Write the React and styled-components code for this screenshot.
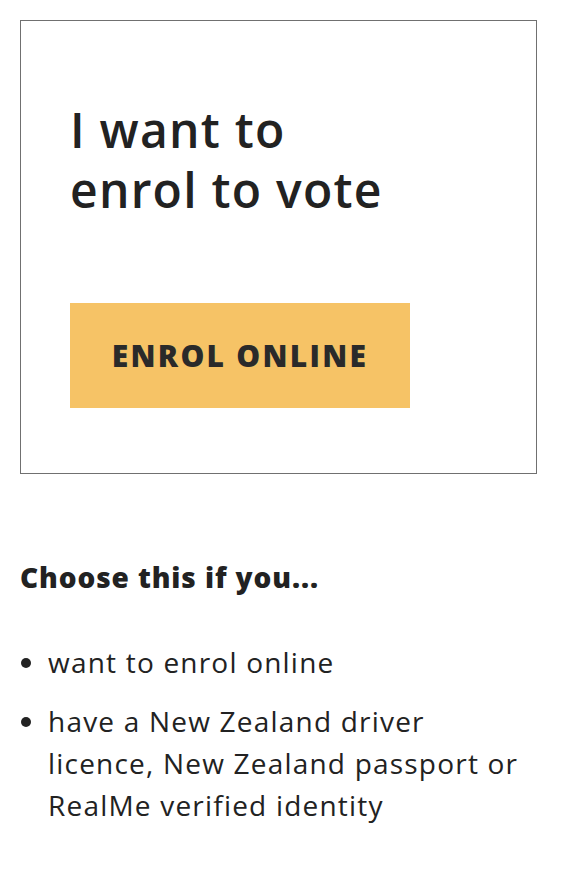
import styled, { createGlobalStyle } from "styled-components";

const GlobalStyle = createGlobalStyle`
  body {
    margin: 0;
    padding: 20px 25px 20px 20px;
    background: #fff;
    color: #222222;
    font-family: "Open Sans", "Liberation Sans", sans-serif;
  }
`;

const Card = styled.section`
  border: 1px solid #707070;
  padding: 79px 49px 65px;
`;

const Heading = styled.h2`
  margin: 0;
  font-size: 48px;
  line-height: 60px;
  font-weight: 600;
  letter-spacing: 0.026em;
  color: #222222;
`;

const EnrolButton = styled.a`
  display: flex;
  align-items: center;
  justify-content: center;
  width: 340px;
  height: 105px;
  margin-top: 83px;
  background-color: #f6c366;
  color: #2a2a2a;
  font-size: 30px;
  font-weight: 800;
  letter-spacing: 0.075em;
  text-decoration: none;
  text-transform: uppercase;
`;

const SubHeading = styled.h3`
  margin: 82px 0 0;
  font-size: 28px;
  line-height: 42px;
  font-weight: 800;
  letter-spacing: 0.032em;
`;

const Criteria = styled.ul`
  margin: 43px 0 0;
  padding: 0 8px 0 28px;
  list-style: disc;

  li {
    font-size: 28px;
    line-height: 42px;
    letter-spacing: 0.043em;
    margin-bottom: 17px;
  }
`;

const criteria = [
  "want to enrol online",
  "have a New Zealand driver licence, New Zealand passport or RealMe verified identity",
];

export default function App() {
  return (
    <>
      <GlobalStyle />
      <Card>
        <Heading>
          I want to
          <br />
          enrol to vote
        </Heading>
        <EnrolButton href="#">Enrol online</EnrolButton>
      </Card>
      <SubHeading>Choose this if you...</SubHeading>
      <Criteria>
        {criteria.map((item) => (
          <li key={item}>{item}</li>
        ))}
      </Criteria>
    </>
  );
}
